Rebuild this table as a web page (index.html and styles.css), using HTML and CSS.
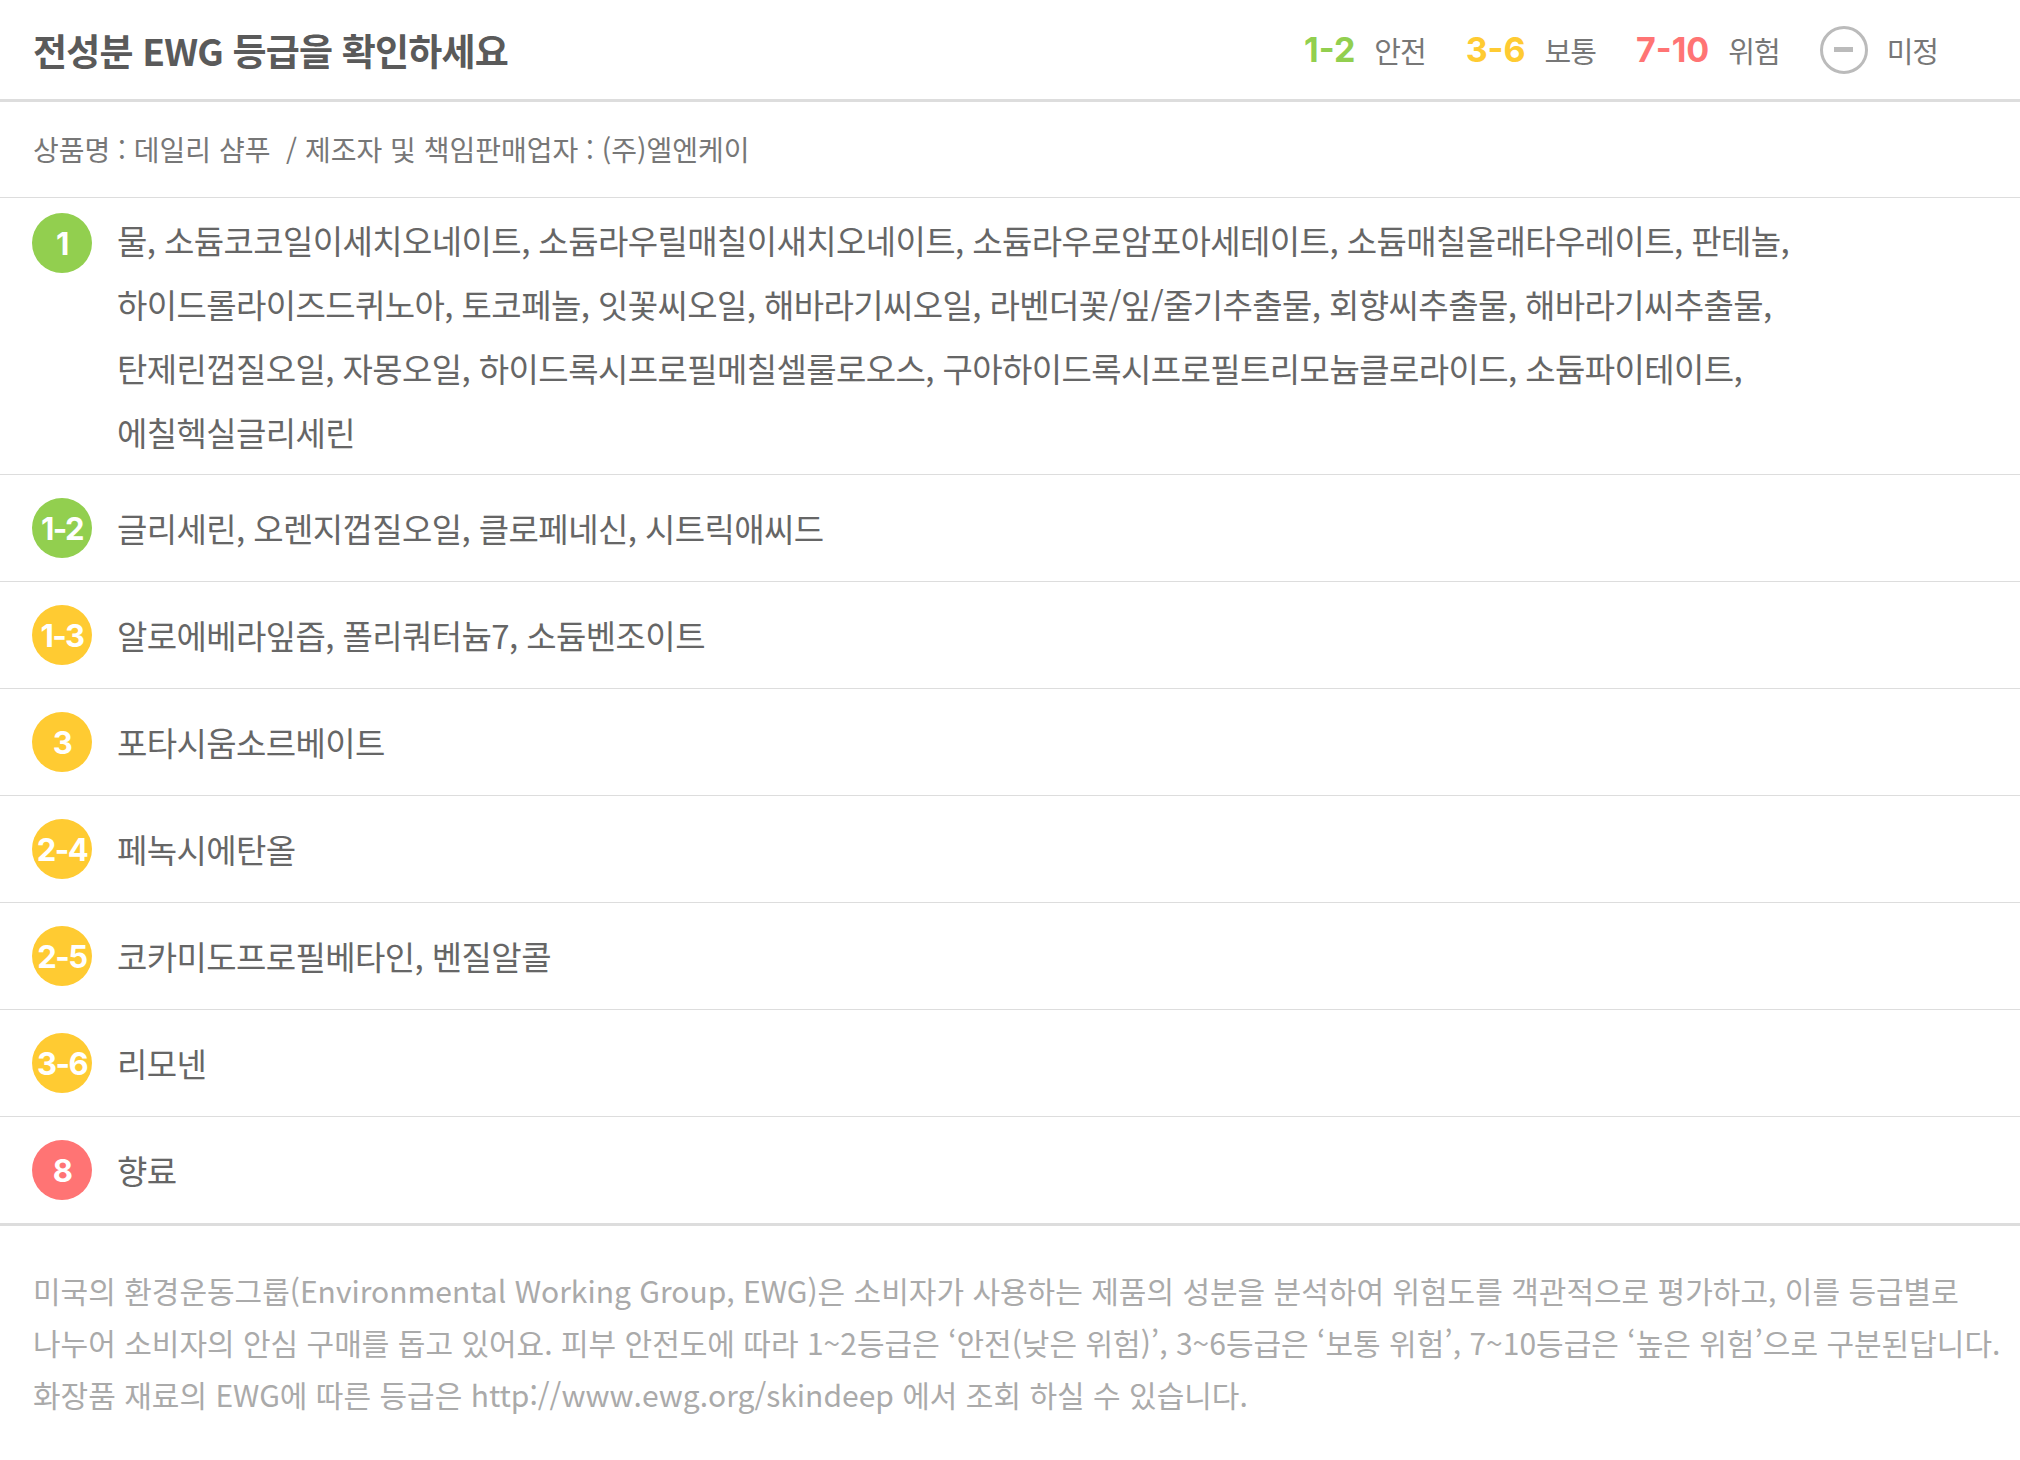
FILE: index.html
```html
<!DOCTYPE html>
<html lang="ko">
   <head>
      <meta charset="utf-8">
      <title>전성분 EWG 등급</title>
      <link rel="stylesheet" href="styles.css">
   </head>
   <body>

   <div class="head">
      <h1>전성분 EWG 등급을 확인하세요</h1>
      <ul class="legend">
         <li><b class="safe">1-2</b> 안전</li>
         <li><b class="normal">3-6</b> 보통</li>
         <li><b class="danger">7-10</b> 위험</li>
         <li><span class="none"></span> 미정</li>
      </ul>
   </div>

   <p class="product">상품명 : 데일리 샴푸 &nbsp;/ 제조자 및 책임판매업자 : (주)엘엔케이</p>

   <ul class="grades">
      <li class="multi"><span class="badge safe">1</span>
         <p>물, 소듐코코일이세치오네이트, 소듐라우릴매칠이새치오네이트, 소듐라우로암포아세테이트, 소듐매칠올래타우레이트, 판테놀, 하이드롤라이즈드퀴노아, 토코페놀, 잇꽃씨오일, 해바라기씨오일, 라벤더꽃/잎/줄기추출물, 회향씨추출물, 해바라기씨추출물, 탄제린껍질오일, 자몽오일, 하이드록시프로필메칠셀룰로오스, 구아하이드록시프로필트리모늄클로라이드, 소듐파이테이트, 에칠헥실글리세린</p></li>
      <li><span class="badge safe">1-2</span><p>글리세린, 오렌지껍질오일, 클로페네신, 시트릭애씨드</p></li>
      <li><span class="badge normal">1-3</span><p>알로에베라잎즙, 폴리쿼터늄7, 소듐벤조이트</p></li>
      <li><span class="badge normal">3</span><p>포타시움소르베이트</p></li>
      <li><span class="badge normal">2-4</span><p>페녹시에탄올</p></li>
      <li><span class="badge normal">2-5</span><p>코카미도프로필베타인, 벤질알콜</p></li>
      <li><span class="badge normal">3-6</span><p>리모넨</p></li>
      <li><span class="badge danger">8</span><p>향료</p></li>
   </ul>

   <p class="note">미국의 환경운동그룹(Environmental Working Group, EWG)은 소비자가 사용하는 제품의 성분을 분석하여 위험도를 객관적으로 평가하고, 이를 등급별로<br>
      나누어 소비자의 안심 구매를 돕고 있어요. 피부 안전도에 따라 1~2등급은 ‘안전(낮은 위험)’, 3~6등급은 ‘보통 위험’, 7~10등급은 ‘높은 위험’으로 구분된답니다.<br>
      화장품 재료의 EWG에 따른 등급은 http://www.ewg.org/skindeep 에서 조회 하실 수 있습니다.</p>

   </body>
</html>
```

FILE: styles.css
```css
body { margin:0; background:#fff; color:#666; word-break:keep-all;
       font-family:"Noto Sans CJK KR", "Noto Sans", sans-serif; }
ul, p, h1 { margin:0; padding:0; list-style:none; }

.head { display:flex; align-items:center; justify-content:space-between;
        height:99px; padding:0 82px 0 33px; border-bottom:3px solid #ddd; }
.head h1 { font-size:37px; font-weight:700; color:#5a5a5a; letter-spacing:-0.8px; }

.legend { display:flex; align-items:center; gap:40px; font-size:29px; color:#777; letter-spacing:-1px; }
.legend li { display:flex; align-items:center; gap:19px; }
.legend b { font-family:Inter, "Liberation Sans", sans-serif; font-size:34px; font-weight:700; letter-spacing:0; }
.safe { color:#92cf4f; }
.normal { color:#ffcb32; }
.danger { color:#ff7474; }
.none { display:flex; align-items:center; justify-content:center;
        width:42px; height:42px; border:3px solid #bbb; border-radius:50%; }
.none::after { content:""; width:19px; height:5px; background:#bbb; }

.product { height:95px; line-height:95px; padding-left:33px; border-bottom:1px solid #ddd;
           font-size:28px; color:#777; letter-spacing:0; }

.grades li { display:flex; align-items:center; gap:25px; padding:21px 140px 21px 32px;
             border-bottom:1px solid #ddd; }
.grades li:last-child { border-bottom-width:3px; }
.grades li.multi { align-items:flex-start; padding-top:10px; padding-bottom:10px; }
.grades li.multi .badge { margin-top:5px; }
.grades p { font-size:33px; line-height:64px; letter-spacing:-0.6px; color:#666; }

.badge { flex:none; display:flex; align-items:center; justify-content:center;
         width:60px; height:60px; border-radius:50%; color:#fff;
         font-family:Inter, "Liberation Sans", sans-serif; font-size:31px; font-weight:700; letter-spacing:-1.5px; }
.badge.safe { background:#92cf4f; }
.badge.normal { background:#ffcb32; }
.badge.danger { background:#ff7474; }

.note { padding:38px 0 40px 33px; font-size:30px; line-height:52px; color:#aaa;
        letter-spacing:0; white-space:nowrap; }
```
